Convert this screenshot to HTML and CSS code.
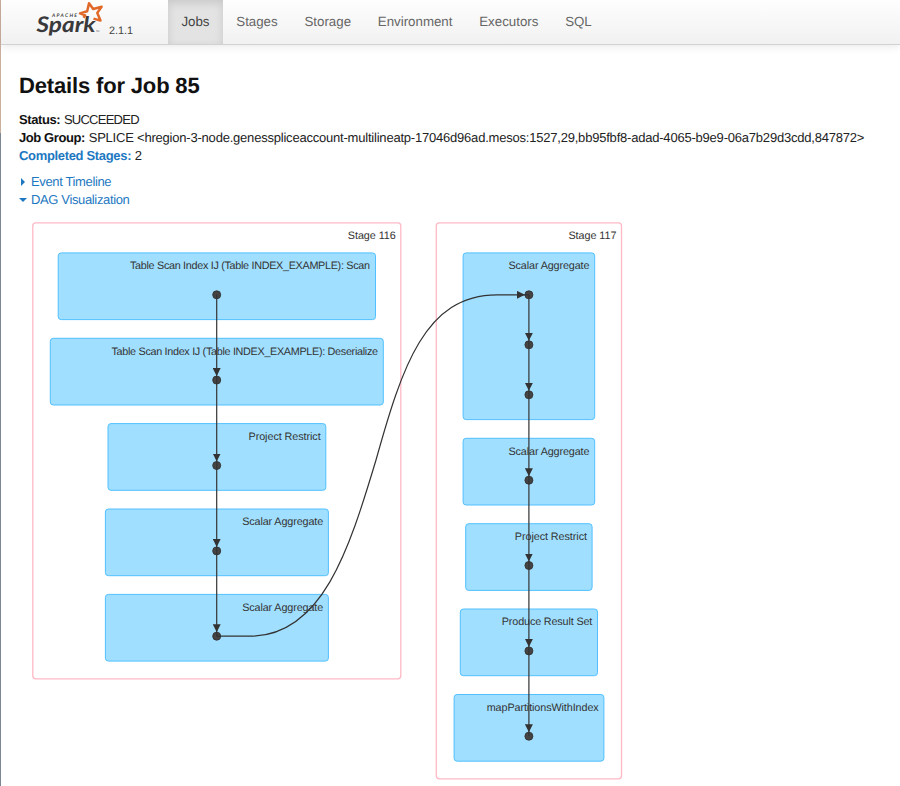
FILE: index.html
```
<!DOCTYPE html>
<html lang="en">
<head>
<meta charset="utf-8">
<title>Spark Jobs - Details for Job 85</title>
<link rel="stylesheet" href="styles.css">
</head>
<body>
<header class="navbar">
  <div class="brand">
    <svg class="logo" width="72" height="40" viewBox="0 0 72 40">
      <text class="logo-apache" x="18" y="17" textLength="25">APACHE</text>
      <text class="logo-spark" x="2.5" y="31.5" textLength="59" lengthAdjust="spacingAndGlyphs">Spark</text>
      <path class="logo-star" d="M49.5 17.8 L51.2 15.4 L46 13.4 L53.2 11.2 L55 3.3 L59.2 9 L67.6 6.8 L63.3 12.9 L66.5 20.6 L59.5 18.6"/>
      <text class="logo-tm" x="62" y="31.5">TM</text>
    </svg>
    <span class="version">2.1.1</span>
  </div>
  <nav class="tabs">
    <a class="tab active">Jobs</a>
    <a class="tab">Stages</a>
    <a class="tab">Storage</a>
    <a class="tab">Environment</a>
    <a class="tab">Executors</a>
    <a class="tab">SQL</a>
  </nav>
</header>
<main class="content">
  <h1>Details for Job 85</h1>
  <ul class="summary">
    <li><strong>Status:</strong> <span class="status">SUCCEEDED</span></li>
    <li><strong>Job Group:</strong> <span class="group">SPLICE &lt;hregion-3-node.genesspliceaccount-multilineatp-17046d96ad.mesos:1527,29,bb95fbf8-adad-4065-b9e9-06a7b29d3cdd,847872&gt;</span></li>
    <li><a><strong>Completed Stages:</strong></a> 2</li>
  </ul>
  <div class="toggles">
    <a class="toggle"><span class="arrow closed"></span>Event Timeline</a>
    <a class="toggle"><span class="arrow open"></span>DAG Visualization</a>
  </div>
  <svg class="dag" width="881" height="576" viewBox="19 210 881 576">
    <defs>
      <marker id="arrow" viewBox="0 0 8 8" refX="12" refY="4" markerWidth="8" markerHeight="8" markerUnits="userSpaceOnUse" orient="auto">
        <path d="M0 0 L8 4 L0 8 Z"/>
      </marker>
    </defs>
    <g class="stage">
      <rect x="32.8" y="222.8" width="368" height="456" rx="3"/>
      <rect x="436.3" y="222.8" width="185.2" height="556" rx="3"/>
    </g>
    <g class="operation">
      <rect x="58.2" y="252.9" width="317.3" height="66.7" rx="3"/>
      <rect x="50.3" y="338.3" width="333" height="66.7" rx="3"/>
      <rect x="108" y="423.6" width="217.8" height="66.7" rx="3"/>
      <rect x="105.4" y="509" width="223" height="66.7" rx="3"/>
      <rect x="105.4" y="594.4" width="223" height="66.7" rx="3"/>
      <rect x="463.1" y="252.9" width="131.6" height="166.7" rx="3"/>
      <rect x="463.1" y="438.3" width="131.6" height="66.7" rx="3"/>
      <rect x="465.7" y="523.7" width="126.4" height="66.7" rx="3"/>
      <rect x="460.3" y="609" width="137.2" height="66.7" rx="3"/>
      <rect x="454.1" y="694.5" width="149.8" height="66.7" rx="3"/>
    </g>
    <g class="label">
      <text x="347.8" y="239.4" textLength="48">Stage 116</text>
      <text x="568.4" y="239.4" textLength="48">Stage 117</text>
      <text x="130" y="269.4" textLength="240">Table Scan Index IJ (Table INDEX_EXAMPLE): Scan</text>
      <text x="111.5" y="355" textLength="266.5">Table Scan Index IJ (Table INDEX_EXAMPLE): Deserialize</text>
      <text x="248.5" y="440.4" textLength="72.2">Project Restrict</text>
      <text x="242.2" y="525.4" textLength="81">Scalar Aggregate</text>
      <text x="242.2" y="611" textLength="81">Scalar Aggregate</text>
      <text x="508.5" y="269.4" textLength="81">Scalar Aggregate</text>
      <text x="508.5" y="455" textLength="81">Scalar Aggregate</text>
      <text x="514.8" y="540.4" textLength="72.2">Project Restrict</text>
      <text x="501.8" y="625.4" textLength="90.5">Produce Result Set</text>
      <text x="486.7" y="711.2" textLength="112">mapPartitionsWithIndex</text>
    </g>
    <g class="node">
      <circle cx="216.7" cy="294.8" r="4"/>
      <circle cx="216.7" cy="380.1" r="4"/>
      <circle cx="216.7" cy="465.5" r="4"/>
      <circle cx="216.7" cy="550.9" r="4"/>
      <circle cx="216.7" cy="636.2" r="4"/>
      <circle cx="528.9" cy="294.8" r="4"/>
      <circle cx="528.9" cy="344.8" r="4"/>
      <circle cx="528.9" cy="394.8" r="4"/>
      <circle cx="528.9" cy="480.2" r="4"/>
      <circle cx="528.9" cy="565.5" r="4"/>
      <circle cx="528.9" cy="650.9" r="4"/>
      <circle cx="528.9" cy="736.2" r="4"/>
    </g>
    <g class="edge">
      <path d="M216.7 294.8V380.1"/>
      <path d="M216.7 380.1V465.5"/>
      <path d="M216.7 465.5V550.9"/>
      <path d="M216.7 550.9V636.2"/>
      <path d="M528.9 294.8V344.8"/>
      <path d="M528.9 344.8V394.8"/>
      <path d="M528.9 394.8V480.2"/>
      <path d="M528.9 480.2V565.5"/>
      <path d="M528.9 565.5V650.9"/>
      <path d="M528.9 650.9V736.2"/>
      <path d="M216.7 636.2H250C322 636.2 349 550 376 460C402 367 425 294.8 497 294.8H528.9"/>
    </g>
  </svg>
</main>
</body>
</html>
```
FILE: styles.css
```
* { box-sizing: border-box; }

body {
  margin: 0;
  height: 786px;
  overflow: hidden;
  font: 13px/17.8px "Liberation Sans", Arial, sans-serif;
  text-rendering: geometricPrecision;
  color: #222;
  background: linear-gradient(#cbb0a0 0 133px, #7d8794 133px) 0 0 / 1px 100% no-repeat #fff;
}

a { color: #1d78c1; }

.navbar {
  display: flex;
  height: 45px;
  margin-left: 1px;
  background: linear-gradient(#fefefe, #f1f1f1);
  border-bottom: 1px solid #d2d2d2;
  box-shadow: 0 1px 9px rgba(0, 0, 0, 0.1);
}

.brand {
  display: flex;
  width: 167px;
  padding-left: 33px;
}

.logo { flex: none; }

.logo text { font-family: Lato, sans-serif; font-style: italic; fill: #3a3a3c; }
.logo .logo-apache { font-size: 5px; font-weight: 700; }
.logo .logo-spark { font-size: 21.5px; font-weight: 700; }
.logo .logo-tm { font-size: 2.5px; }
.logo-star { fill: none; stroke: #e0692a; stroke-width: 2.5; stroke-linejoin: round; }

.version {
  padding: 23px 0 0 3px;
  font-size: 10.8px;
  letter-spacing: 0;
  color: #444;
}

.tabs { display: flex; }

.tab {
  height: 44px;
  padding: 13px 13.4px 0;
  font-size: 13.3px;
  color: #666;
}

.tab.active {
  color: #444;
  background: #e3e3e3;
  box-shadow: inset 0 3px 8px rgba(0, 0, 0, 0.12);
}

.content { padding: 30px 0 0 19px; }

h1 {
  margin: 0;
  font-size: 22px;
  line-height: 22px;
  letter-spacing: -0.16px;
  color: #111;
}

.summary {
  margin: 14px 0 0;
  padding: 0;
  list-style: none;
  white-space: nowrap;
}

.summary strong { color: #111; letter-spacing: -0.4px; }
.summary a strong { color: #1d78c1; letter-spacing: -0.33px; }
.status { letter-spacing: -0.75px; }
.group { letter-spacing: -0.21px; }

.toggles {
  display: flex;
  flex-direction: column;
  margin: 8.5px 0 1.5px;
}

.toggle {
  display: flex;
  align-items: center;
  letter-spacing: -0.36px;
}

.arrow {
  width: 0;
  height: 0;
  border: 4px solid transparent;
}

.arrow.closed { margin: 0 6px 0 2px; border-left-color: #1d78c1; border-right: 0; }
.arrow.open { margin: 0 4px 0 0; border-top-color: #1d78c1; border-bottom: 0; }

.dag { display: block; }
.stage rect { fill: #fff; stroke: #ffb9c5; stroke-width: 1.3; }
.operation rect { fill: #a0dfff; stroke: #52c0ff; stroke-width: 1; }
.label text { font-size: 10.8px; fill: #333; }
.node circle { fill: #444; stroke: #333; stroke-width: 0.9; }
.edge path { fill: none; stroke: #333; stroke-width: 1.2; marker-end: url(#arrow); }
#arrow path { fill: #333; stroke: none; }
```
